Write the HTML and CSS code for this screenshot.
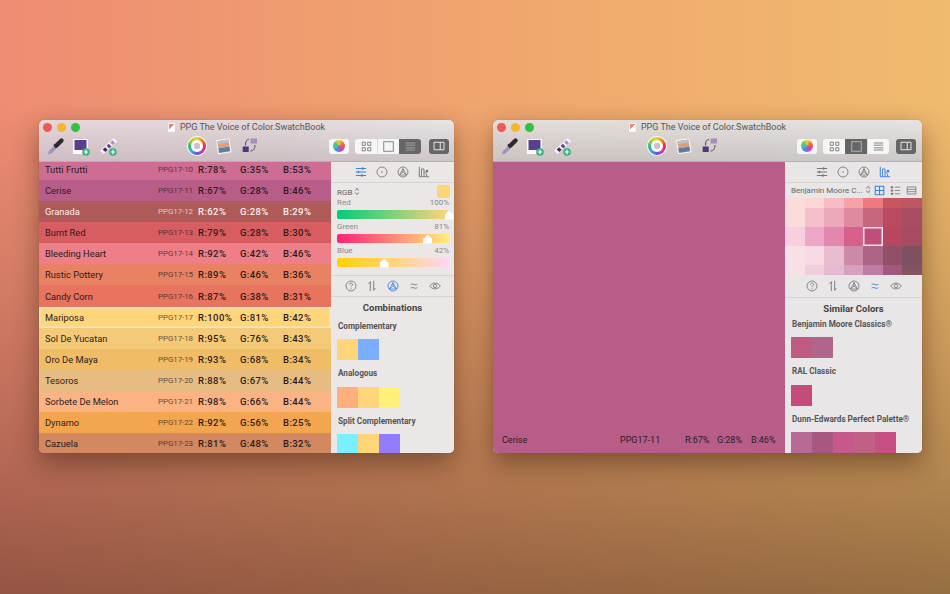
FILE: index.html
```html
<!DOCTYPE html>
<html lang="en">
<head>
    <meta charset="utf-8">
    <title>PPG The Voice of Color.SwatchBook</title>
    <link rel="stylesheet" href="styles.css">
</head>
<body>

<!-- icons used by both windows -->
<svg class="defs" width="0" height="0">
    <symbol id="i-dropper" viewBox="0 0 19 19">
        <path d="M2 17.5l1-3.500 6-6 2.500 2.500-6 6z" fill="#a28fc4"/>
        <path d="M8 7.500l2.500 3" stroke="#2c2c30" stroke-width="2"/>
        <path d="M10.500 8.500l5-5" stroke="#2c2c30" stroke-width="4.400" stroke-linecap="round"/>
    </symbol>
    <symbol id="i-tile" viewBox="0 0 19 19">
        <rect x="0" y="2" width="15" height="15" fill="#fbfbfb"/>
        <rect x="1.500" y="3" width="12" height="10" fill="#5a3f8e"/>
        <circle cx="13" cy="15" r="3.800" fill="#35b27e"/>
        <path d="M13 12.800v4.400M10.800 15h4.400" stroke="#fff" stroke-width="1.200"/>
    </symbol>
    <symbol id="i-fan" viewBox="0 0 19 19">
        <path d="M0 13.500L13.500 1l3.800 3.500L3.500 17z" fill="#f4f0f4"/>
        <path d="M2.700 12.400l2.600 2.600 2.400-2.200-2.600-2.600z" fill="#3f3160"/>
        <path d="M6.600 8.800l2.600 2.600 2.200-2-2.600-2.600z" fill="#63468f"/>
        <path d="M10.200 5.400l2.600 2.600 2.200-2.100-2.600-2.600z" fill="#a394c4"/>
        <circle cx="13" cy="15" r="3.800" fill="#35b27e"/>
        <path d="M13 12.800v4.400M10.800 15h4.400" stroke="#fff" stroke-width="1.200"/>
    </symbol>
    <symbol id="i-photo" viewBox="0 0 19 19">
        <path d="M2 3.300l13.500-2 2 14-13.500 2z" fill="#f7f5f2"/>
        <path d="M3.300 4.300l11.200-1.700 1 7-11.200 1.700z" fill="#dd9f7c"/>
        <path d="M3.300 4.300l11.200-1.700.4 3-11.200 1.700z" fill="#bcbecb"/>
        <path d="M4.300 11.300l11.200-1.700.7 4.600-11.200 1.700z" fill="#5c7fa5"/>
    </symbol>
    <symbol id="i-link" viewBox="0 0 19 19">
        <rect x="9.500" y="1.500" width="6.500" height="5" fill="#a48fbc"/>
        <rect x="1.700" y="9.500" width="6" height="5.500" fill="#4f3580"/>
        <path d="M8 2.500C5.500 2.500 4.500 4.500 4.500 8.500M14 8c0 3.500-1.500 6-4.500 6" fill="none" stroke="#4a4a4e" stroke-width="1"/>
    </symbol>
    <symbol id="i-grid" viewBox="0 0 14 14">
        <path d="M1.500 1.500h4v4h-4zM8.500 1.500h4v4h-4zM1.500 8.500h4v4h-4zM8.500 8.500h4v4h-4z" fill="none" stroke="currentColor" stroke-width="1"/>
    </symbol>
    <symbol id="i-single" viewBox="0 0 14 14">
        <rect x="1" y="1" width="12" height="12" fill="none" stroke="currentColor" stroke-width="1"/>
    </symbol>
    <symbol id="i-lines" viewBox="0 0 14 14">
        <path d="M1 1.500h12v2H1zM1 4.500h12v2H1zM1 7.500h12v2H1zM1 10.500h12v2H1z" fill="currentColor"/>
    </symbol>
    <symbol id="i-panel" viewBox="0 0 14 12">
        <path d="M1 1.500h12v9H1zM8.500 1.500v9" fill="none" stroke="currentColor" stroke-width="1.100"/>
    </symbol>
    <symbol id="i-updown" viewBox="0 0 6 10">
        <path d="M1 4l2-2.500L5 4M1 6l2 2.500L5 6" fill="none" stroke="currentColor" stroke-width=".9"/>
    </symbol>
    <symbol id="i-sliders" viewBox="0 0 14 14">
        <path d="M1 3h12M1 7h12M1 11h12" stroke="currentColor" stroke-width="1.200"/>
        <path d="M9 1.500v3M4 5.500v3M8 9.500v3" stroke="currentColor" stroke-width="1.600"/>
    </symbol>
    <symbol id="i-dot" viewBox="0 0 14 14">
        <circle cx="7" cy="7" r="5.800" fill="none" stroke="currentColor"/>
        <circle cx="7" cy="7" r=".9" fill="currentColor"/>
    </symbol>
    <symbol id="i-wheel" viewBox="0 0 14 14">
        <circle cx="7" cy="7" r="5.800" fill="none" stroke="currentColor"/>
        <path d="M7 3L3 10.500h8zM7 7L3 10.500M7 7l4 3.500M7 3v4" fill="none" stroke="currentColor" stroke-width=".9"/>
    </symbol>
    <symbol id="i-chart" viewBox="0 0 14 14">
        <path d="M1.500 1v11.500H13M4 12V3.500h3V12M7 6.500l3 3V12" fill="none" stroke="currentColor" stroke-width="1.100"/>
        <circle cx="10.500" cy="6" r="1.500" fill="currentColor"/>
    </symbol>
    <symbol id="i-help" viewBox="0 0 14 14">
        <circle cx="7" cy="7" r="5.800" fill="none" stroke="currentColor"/>
        <path d="M5.200 5.500c0-2.400 3.700-2.400 3.700-.1 0 1.500-1.900 1.500-1.900 3.100M7 9.500v1.200" fill="none" stroke="currentColor"/>
    </symbol>
    <symbol id="i-sort" viewBox="0 0 14 14">
        <path d="M5 13V2L3 4.500M9 1v11l2-2.500" fill="none" stroke="currentColor" stroke-width="1.100"/>
    </symbol>
    <symbol id="i-approx" viewBox="0 0 14 14">
        <path d="M3 5.500c1.500-1 2.500-1 4-.3s2.500.7 4-.3M3 9.500c1.500-1 2.500-1 4-.3s2.500.7 4-.3" fill="none" stroke="currentColor" stroke-width="1.100"/>
    </symbol>
    <symbol id="i-eye" viewBox="0 0 14 14">
        <path d="M.8 7c3-4.500 9.400-4.500 12.400 0-3 4.500-9.400 4.500-12.400 0z" fill="none" stroke="currentColor"/>
        <circle cx="7" cy="7" r="2" fill="none" stroke="currentColor"/>
    </symbol>
    <symbol id="i-tiles" viewBox="0 0 14 14">
        <path d="M1.500 1.500h11v11h-11zM7 1.500v11M1.500 7h11" fill="none" stroke="currentColor" stroke-width="1.300"/>
    </symbol>
    <symbol id="i-bullets" viewBox="0 0 14 14">
        <path d="M1 1.500h3v2.500H1zM1 5.800h3v2.500H1zM1 10h3v2.500H1z" fill="currentColor"/>
        <path d="M6 2.800h7M6 7h7M6 11.200h7" stroke="currentColor"/>
    </symbol>
    <symbol id="i-rows" viewBox="0 0 14 14">
        <path d="M1.500 2.500h11v9h-11zM1.500 5.500h11M1.500 8.500h11" fill="none" stroke="currentColor"/>
    </symbol>
</svg>

<!-- left window: list view + combinations -->
<div class="window window-list">
    <div class="titlebar">
        <span class="docIcon"></span>
        <span>PPG The Voice of Color.SwatchBook</span>
        <div class="lights"><i class="red"></i><i class="yellow"></i><i class="green"></i></div>
    </div>
    <div class="toolbar">
        <div class="toolGroup toolsLeft">
            <svg class="tool"><use href="#i-dropper"/></svg>
            <svg class="tool"><use href="#i-tile"/></svg>
            <svg class="tool"><use href="#i-fan"/></svg>
        </div>
        <div class="toolGroup toolsMid">
            <span class="wheelIcon"></span>
            <svg class="tool"><use href="#i-photo"/></svg>
            <svg class="tool"><use href="#i-link"/></svg>
        </div>
        <div class="toolsRight">
            <div class="wheelBtn"><span></span></div>
            <div class="segments">
                <div class="seg"><svg><use href="#i-grid"/></svg></div>
                <div class="seg"><svg><use href="#i-single"/></svg></div>
                <div class="seg segOn"><svg><use href="#i-lines"/></svg></div>
            </div>
            <div class="panelBtn"><svg><use href="#i-panel"/></svg></div>
        </div>
    </div>
    <div class="content">
        <div class="list">
            <div class="row" style="background:#cf6c94"><span class="name">Tutti Frutti</span><span class="code">PPG17-10</span><span>R:78%</span><span>G:35%</span><span>B:53%</span></div>
            <div class="row" style="background:#b85d88"><span class="name">Cerise</span><span class="code">PPG17-11</span><span>R:67%</span><span>G:28%</span><span>B:46%</span></div>
            <div class="row rowLight" style="background:#ad5a58"><span class="name">Granada</span><span class="code">PPG17-12</span><span>R:62%</span><span>G:28%</span><span>B:29%</span></div>
            <div class="row" style="background:#d85d60"><span class="name">Burnt Red</span><span class="code">PPG17-13</span><span>R:79%</span><span>G:28%</span><span>B:30%</span></div>
            <div class="row" style="background:#ee7e88"><span class="name">Bleeding Heart</span><span class="code">PPG17-14</span><span>R:92%</span><span>G:42%</span><span>B:46%</span></div>
            <div class="row" style="background:#e98263"><span class="name">Rustic Pottery</span><span class="code">PPG17-15</span><span>R:89%</span><span>G:46%</span><span>B:36%</span></div>
            <div class="row" style="background:#e8735e"><span class="name">Candy Corn</span><span class="code">PPG17-16</span><span>R:87%</span><span>G:38%</span><span>B:31%</span></div>
            <div class="row rowSel" style="background:#ffd57a"><span class="name">Mariposa</span><span class="code">PPG17-17</span><span>R:100%</span><span>G:81%</span><span>B:42%</span></div>
            <div class="row" style="background:#f4ca79"><span class="name">Sol De Yucatan</span><span class="code">PPG17-18</span><span>R:95%</span><span>G:76%</span><span>B:43%</span></div>
            <div class="row" style="background:#f1bc66"><span class="name">Oro De Maya</span><span class="code">PPG17-19</span><span>R:93%</span><span>G:68%</span><span>B:34%</span></div>
            <div class="row" style="background:#e6bc82"><span class="name">Tesoros</span><span class="code">PPG17-20</span><span>R:88%</span><span>G:67%</span><span>B:44%</span></div>
            <div class="row" style="background:#fcb384"><span class="name">Sorbete De Melon</span><span class="code">PPG17-21</span><span>R:98%</span><span>G:66%</span><span>B:44%</span></div>
            <div class="row" style="background:#f3a54f"><span class="name">Dynamo</span><span class="code">PPG17-22</span><span>R:92%</span><span>G:56%</span><span>B:25%</span></div>
            <div class="row" style="background:#d3885f"><span class="name">Cazuela</span><span class="code">PPG17-23</span><span>R:81%</span><span>G:48%</span><span>B:32%</span></div>
        </div>
        <div class="sidebar sidebarNarrow">
            <div class="tabs">
                <svg class="tabBlue"><use href="#i-sliders"/></svg>
                <svg><use href="#i-dot"/></svg>
                <svg><use href="#i-wheel"/></svg>
                <svg><use href="#i-chart"/></svg>
            </div>
            <div class="sliders">
                <div class="modeRow">
                    <span>RGB <svg class="updown"><use href="#i-updown"/></svg></span>
                    <span class="modeSwatch"></span>
                </div>
                <div class="sliderHead"><span>Red</span><span>100%</span></div>
                <div class="bar barRed"><i class="thumb" style="left:100%"></i></div>
                <div class="sliderHead"><span>Green</span><span>81%</span></div>
                <div class="bar barGreen"><i class="thumb" style="left:81%"></i></div>
                <div class="sliderHead"><span>Blue</span><span>42%</span></div>
                <div class="bar barBlue"><i class="thumb" style="left:42%"></i></div>
            </div>
            <div class="tabs tabsLower">
                <svg><use href="#i-help"/></svg>
                <svg><use href="#i-sort"/></svg>
                <svg class="tabBlue"><use href="#i-wheel"/></svg>
                <svg><use href="#i-approx"/></svg>
                <svg><use href="#i-eye"/></svg>
            </div>
            <div class="details">
                <h2>Combinations</h2>
                <h3>Complementary</h3>
                <div class="chips"><i style="background:#ffd57a"></i><i style="background:#7aaeff"></i></div>
                <h3>Analogous</h3>
                <div class="chips"><i style="background:#ffb07a"></i><i style="background:#ffd57a"></i><i style="background:#fff07a"></i></div>
                <h3>Split Complementary</h3>
                <div class="chips"><i style="background:#7aefff"></i><i style="background:#ffd57a"></i><i style="background:#937aff"></i></div>
            </div>
        </div>
    </div>
</div>

<!-- right window: single colour + similar colours -->
<div class="window window-single">
    <div class="titlebar">
        <span class="docIcon"></span>
        <span>PPG The Voice of Color.SwatchBook</span>
        <div class="lights"><i class="red"></i><i class="yellow"></i><i class="green"></i></div>
    </div>
    <div class="toolbar">
        <div class="toolGroup toolsLeft">
            <svg class="tool"><use href="#i-dropper"/></svg>
            <svg class="tool"><use href="#i-tile"/></svg>
            <svg class="tool"><use href="#i-fan"/></svg>
        </div>
        <div class="toolGroup toolsMid">
            <span class="wheelIcon"></span>
            <svg class="tool"><use href="#i-photo"/></svg>
            <svg class="tool"><use href="#i-link"/></svg>
        </div>
        <div class="toolsRight">
            <div class="wheelBtn"><span></span></div>
            <div class="segments">
                <div class="seg"><svg><use href="#i-grid"/></svg></div>
                <div class="seg segOn"><svg><use href="#i-single"/></svg></div>
                <div class="seg"><svg><use href="#i-lines"/></svg></div>
            </div>
            <div class="panelBtn"><svg><use href="#i-panel"/></svg></div>
        </div>
    </div>
    <div class="content">
        <div class="single">
            <span class="singleName">Cerise</span>
            <span class="singleCode">PPG17-11</span>
            <span class="singleR">R:67%</span>
            <span class="singleG">G:28%</span>
            <span>B:46%</span>
        </div>
        <div class="sidebar sidebarWide">
            <div class="tabs">
                <svg><use href="#i-sliders"/></svg>
                <svg><use href="#i-dot"/></svg>
                <svg><use href="#i-wheel"/></svg>
                <svg class="tabBlue"><use href="#i-chart"/></svg>
            </div>
            <div class="bookRow">
                <span class="bookName">Benjamin Moore C... <svg class="updown"><use href="#i-updown"/></svg></span>
                <div class="bookViews">
                    <svg class="tabBlue"><use href="#i-tiles"/></svg>
                    <svg><use href="#i-bullets"/></svg>
                    <svg><use href="#i-rows"/></svg>
                </div>
            </div>
            <div class="shades">
                <i style="background:#fbdcd9"></i><i style="background:#fcd5d6"></i><i style="background:#f9bcc4"></i><i style="background:#f5a3a9"></i><i style="background:#ee7a80"></i><i style="background:#c9565f"></i><i style="background:#bd5762"></i>
                <i style="background:#fbdbdb"></i><i style="background:#f5bfcb"></i><i style="background:#eda9bb"></i><i style="background:#e08aa0"></i><i style="background:#c7667c"></i><i style="background:#ba4a60"></i><i style="background:#a94d62"></i>
                <i style="background:#f9cfe0"></i><i style="background:#eea7c9"></i><i style="background:#e587ad"></i><i style="background:#d8608d"></i><i class="shadeSel" style="background:#bf4f78"></i><i style="background:#b8465f"></i><i style="background:#a84a62"></i>
                <i style="background:#f9dfe6"></i><i style="background:#f8dae4"></i><i style="background:#e9bcd0"></i><i style="background:#cd8aa8"></i><i style="background:#ab6484"></i><i style="background:#8f5068"></i><i style="background:#7f505f"></i>
                <i style="background:#f8e0e6"></i><i style="background:#f0cede"></i><i style="background:#e5bad0"></i><i style="background:#d6a0bf"></i><i style="background:#c07ba4"></i><i style="background:#a2597f"></i><i style="background:#845360"></i>
            </div>
            <div class="tabs tabsLower">
                <svg><use href="#i-help"/></svg>
                <svg><use href="#i-sort"/></svg>
                <svg><use href="#i-wheel"/></svg>
                <svg class="tabBlue"><use href="#i-approx"/></svg>
                <svg><use href="#i-eye"/></svg>
            </div>
            <div class="details">
                <h2>Similar Colors</h2>
                <h3>Benjamin Moore Classics&reg;</h3>
                <div class="chips"><i style="background:#bf5a80"></i><i style="background:#b0658a"></i></div>
                <h3>RAL Classic</h3>
                <div class="chips"><i style="background:#c54b7b"></i></div>
                <h3>Dunn-Edwards Perfect Palette&reg;</h3>
                <div class="chips"><i style="background:#b76a96"></i><i style="background:#a85880"></i><i style="background:#c7588c"></i><i style="background:#c25f84"></i><i style="background:#c74f82"></i></div>
            </div>
        </div>
    </div>
</div>

</body>
</html>
```

FILE: styles.css
```css
html, body
{
    margin:   0;
    height:   100%;
    overflow: hidden;
}

body
{
    position:    relative;
    font-family: Roboto, "Liberation Sans", sans-serif;
    color:       #222;
    background:
        linear-gradient(180deg, rgba(35,12,8,0) 0%, rgba(35,12,8,0) 17%, rgba(35,12,8,.14) 50%, rgba(35,12,8,.28) 77%, rgba(35,12,8,.44) 100%),
        linear-gradient(90deg, #ee8c73 0%, #f0a56e 50%, #f0bb6e 100%);
}

.defs
{
    position: absolute;
}

/* windows sit on the desktop at free positions */
.window
{
    position:      absolute;
    top:           120px;
    height:        333px;
    border-radius: 5px;
    overflow:      hidden;
    display:       flex;
    flex-direction: column;
    box-shadow:    0 10px 26px rgba(50,25,10,.45), 0 0 1px rgba(50,25,10,.4);
}

.window-list
{
    left:  39px;
    width: 415px;
    background:
        linear-gradient(180deg, rgba(110,85,95,0), rgba(110,85,95,.2)) 0 0 / 100% 42px no-repeat,
        linear-gradient(90deg, #e6d6db 0%, #e2d8da 55%, #e6e4e4 100%);
}

.window-single
{
    left:  493px;
    width: 429px;
    background:
        linear-gradient(180deg, rgba(100,90,90,0), rgba(100,90,90,.2)) 0 0 / 100% 42px no-repeat,
        linear-gradient(90deg, #e4dcd8 0%, #e3dfdc 55%, #e5e4e3 100%);
}

.titlebar
{
    position:        relative;
    height:          14px;
    display:         flex;
    justify-content: center;
    align-items:     center;
    gap:             5px;
    font-size:       9px;
    color:           #555;
    flex:            none;
}

.docIcon
{
    width:      7px;
    height:     9px;
    background: linear-gradient(135deg, #e88a7a 45%, #fff 45%);
    border:     1px solid #f5f2f2;
    box-sizing: border-box;
}

.lights
{
    position: absolute;
    left:     4px;
    top:      3px;
    display:  flex;
    gap:      5px;
}

.lights i
{
    width:         9px;
    height:        9px;
    border-radius: 50%;
}

.red    { background: #ee5a52; }
.yellow { background: #f4b52f; }
.green  { background: #2fc240; }

.toolbar
{
    height:         28px;
    box-sizing:     border-box;
    padding-bottom: 3px;
    flex:           none;
    display:        flex;
    align-items:    center;
    border-bottom:  1px solid #b9aeb0;
}

.toolGroup, .toolsRight
{
    display:     flex;
    align-items: center;
}

.toolsLeft
{
    margin-left: 7px;
    gap:         8px;
}

.tool
{
    width:  19px;
    height: 19px;
}

.toolsMid
{
    gap: 8px;
}

.window-list .toolsMid   { margin-left: 69px; }
.window-single .toolsMid { margin-left: 75px; }

.wheelIcon
{
    width:         18px;
    height:        18px;
    border-radius: 50%;
    box-sizing:    border-box;
    border:        3.5px solid transparent;
    background:
        radial-gradient(circle, #c9c2c9 0 3.5px, #fff 3.5px) padding-box,
        conic-gradient(#f5d020, #ef8020, #e8304c, #c83cb0, #6a50e0, #30a8e8, #30c070, #a8d830, #f5d020) border-box;
    box-shadow:    0 0 0 1px #fff;
}

.toolsRight
{
    margin-left:  auto;
    margin-right: 5px;
    gap:          6px;
}

.window-single .toolsRight
{
    margin-right: 6px;
}

.wheelBtn
{
    width:         20px;
    height:        15px;
    background:    #f6f6f6;
    border-radius: 3px;
    display:       flex;
    align-items:   center;
    justify-content: center;
}

.wheelBtn span
{
    width:         12px;
    height:        12px;
    border-radius: 50%;
    background:    conic-gradient(#f0d030, #ef7a30, #e84a70, #b050d0, #5a80e8, #40c0c0, #60c860, #f0d030);
}

.segments
{
    display:       flex;
    border-radius: 3px;
    overflow:      hidden;
}

.seg
{
    width:      22px;
    height:     15px;
    background: #f6f6f6;
    color:      #666;
    display:    flex;
    align-items: center;
    justify-content: center;
    border-left: 1px solid #ddd;
    box-sizing: border-box;
}

.seg:first-child
{
    border-left: 0;
}

.seg svg
{
    width:  11px;
    height: 11px;
}

.segOn
{
    background: #666;
    color:      #8d8d8d;
    border-left: 0;
}

.window-single .segOn { color: #c8c8c8; }
.window-single .seg:nth-child(3) { color: #aaa; }

.panelBtn
{
    width:         20px;
    height:        15px;
    margin-left:   2px;
    background:    #666;
    color:         #f2f2f2;
    border-radius: 3px;
    display:       flex;
    align-items:   center;
    justify-content: center;
}

.window-single .panelBtn
{
    margin-left: 1px;
}

.panelBtn svg
{
    width:  12px;
    height: 10px;
}

.content
{
    flex:     1;
    display:  flex;
    overflow: hidden;
}

.list
{
    width:      292px;
    flex:       none;
    margin-top: -3.1px;
}

.row
{
    height:      21.1px;
    box-sizing:  border-box;
    display:     grid;
    grid-template-columns: 104px 49px 42px 43px 40px;
    padding-left: 6px;
    align-items: center;
    font-size:   9.5px;
    font-weight: 500;
    letter-spacing: .4px;
    color:       #2a1c1c;
}

.row .name
{
    font-size:      9.3px;
    font-weight:    400;
    letter-spacing: 0;
    white-space:    nowrap;
}

.row .code
{
    font-size:      8px;
    font-weight:    400;
    letter-spacing: -.1px;
    text-align:     right;
    padding-right:  5px;
    opacity:        .7;
}

.rowLight
{
    color: #fdeeee;
}

.rowSel
{
    box-shadow: inset 0 0 0 1.5px #eee6d8;
}

.sidebar
{
    background: #ebe7e6;
    min-width:  0;
    flex:       1;
    color:      #555;
}

.sidebarWide
{
    background: #e8e6e6;
}

.tabs
{
    height:        21px;
    box-sizing:    border-box;
    border-bottom: 1px solid #d8d4d3;
    display:       flex;
    justify-content: center;
    align-items:   center;
    gap:           9px;
    color:         #777;
}

.tabs svg
{
    width:  12px;
    height: 12px;
    flex:   none;
}

.tabBlue
{
    color: #3b82e0;
}

.sidebarWide .tabsLower
{
    height: 23px;
}

.updown
{
    width:          6px;
    height:         9px;
    vertical-align: -1px;
}

.sliders
{
    height:        93px;
    padding:       3px 5px 0 6px;
    box-sizing:    border-box;
    border-bottom: 1px solid #d8d4d3;
}

.modeRow
{
    display:     flex;
    justify-content: space-between;
    align-items: center;
    font-size:   8px;
    height:      11px;
    margin-bottom: 1px;
    color:       #666;
}

.modeSwatch
{
    width:         11px;
    height:        11px;
    border-radius: 1px;
    background:    #ffd57a;
    box-shadow:    0 0 0 .5px #d8c08a;
}

.sliderHead
{
    display:     flex;
    justify-content: space-between;
    font-size:   8px;
    color:       #8a8a8a;
    margin-bottom: 1.5px;
    height:      10px;
    line-height: 10px;
}

.bar
{
    position:      relative;
    height:        9px;
    border-radius: 2px;
    margin-bottom: 3.5px;
}

.barRed   { background: linear-gradient(90deg, #00cd7a, #ffd57a); }
.barGreen { background: linear-gradient(90deg, #ff1f78, #fff07a); }
.barBlue  { background: linear-gradient(90deg, #ffd000, #ffd7f5); }

.thumb
{
    position:    absolute;
    bottom:      -1px;
    width:       9px;
    height:      9px;
    margin-left: -4.5px;
    background:  #fff;
    clip-path:   polygon(50% 0, 100% 50%, 100% 100%, 0 100%, 0 50%);
}

.details
{
    padding: 4px 0 0 7px;
}

.details h2
{
    margin:      0 0 5.5px -7px;
    font-size:   9.5px;
    font-weight: 700;
    text-align:  center;
    color:       #444;
    line-height: 14px;
}

.sidebarWide .details h2
{
    margin-bottom: 2.5px;
}

.details h3
{
    margin:      0 0 7.5px;
    font-size:   8.2px;
    font-weight: 700;
    color:       #555;
    line-height: 11px;
    white-space: nowrap;
}

.chips
{
    display: flex;
    margin:  0 0 8px -1px;
    height:  21px;
}

.chips i
{
    width:  21px;
    height: 21px;
}

.single
{
    width:      292px;
    flex:       none;
    box-sizing: border-box;
    background: #b85d88;
    display:    flex;
    align-items: flex-end;
    padding:    0 0 8px 9px;
    font-size:  9px;
    color:      #2a1c24;
}

.singleName { width: 118px; }
.singleCode { width: 65px; }
.singleR    { width: 32px; }
.singleG    { width: 34px; }

.bookRow
{
    height:      15px;
    display:     flex;
    align-items: center;
    padding:     0 5px 0 6px;
    font-size:   8px;
    color:       #666;
}

.bookName
{
    width:        78px;
    flex:         none;
    white-space:  nowrap;
    border-right: 1px solid #d8d4d3;
    line-height:  15px;
}

.bookViews
{
    display:     flex;
    gap:         5px;
    margin-left: auto;
    color:       #777;
}

.bookViews svg
{
    width:  11px;
    height: 11px;
}

.shades
{
    display:      grid;
    grid-template-columns: repeat(7, 1fr);
    grid-template-rows:    10px 19px 19px 19px 10px;
}

.shadeSel
{
    box-shadow: inset 0 0 0 1.5px #f6e4ea;
}
```
